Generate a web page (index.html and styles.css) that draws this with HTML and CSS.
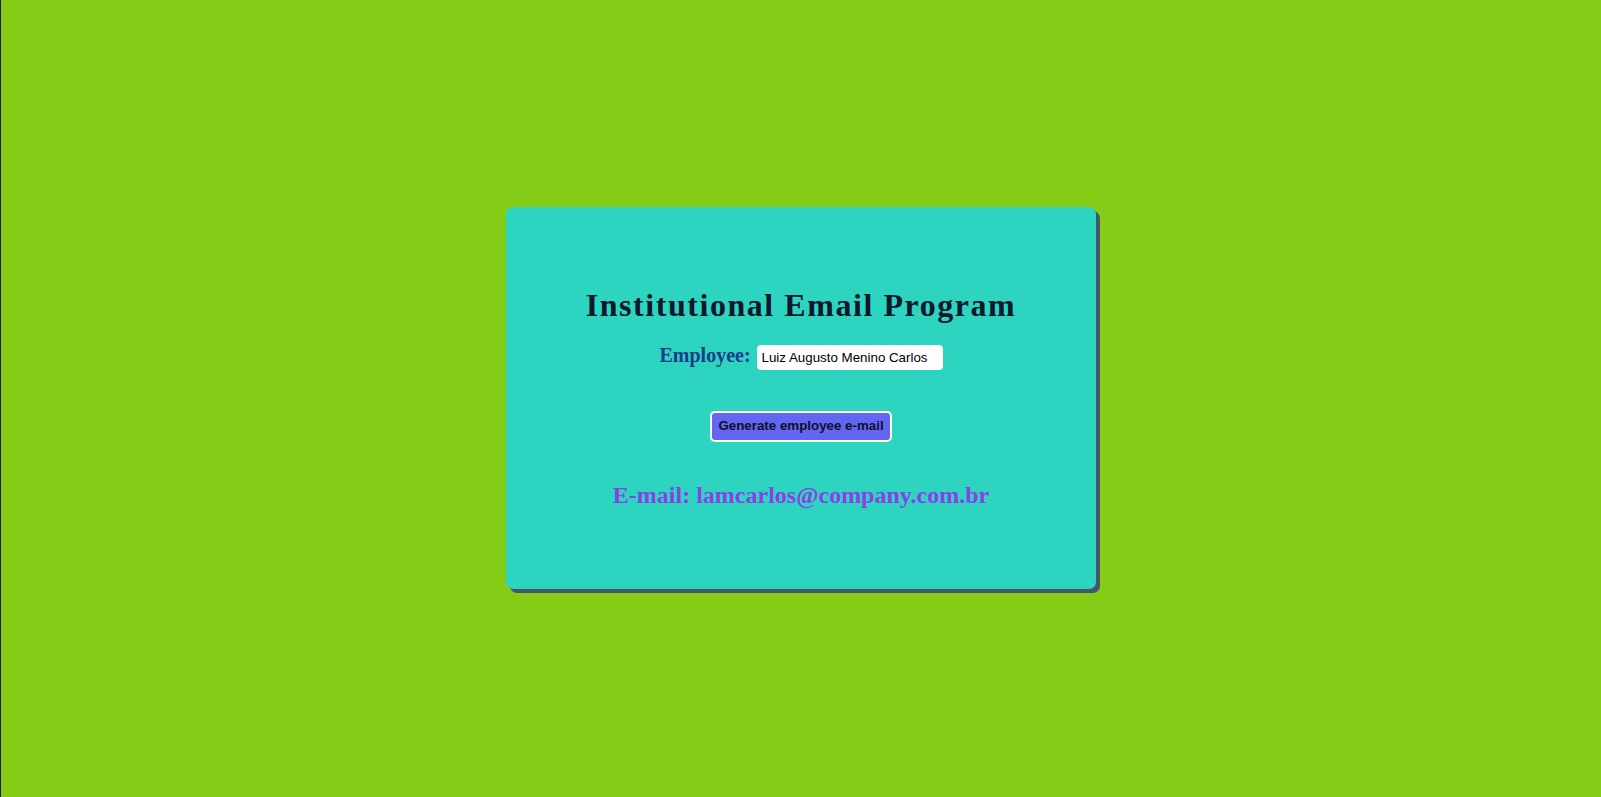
FILE: index.html
```html
<!DOCTYPE html>
<html lang="en">
<head>
<meta charset="utf-8">
<title>Institutional Email Program</title>
<link rel="stylesheet" href="styles.css">
</head>
<body>
<main class="card">
  <h1 class="title">Institutional Email Program</h1>
  <div class="field-row">
    <label class="field-label" for="employee">Employee:</label>
    <input class="field-input" id="employee" type="text" value="Luiz Augusto Menino Carlos">
  </div>
  <button class="generate-btn" type="button">Generate employee e-mail</button>
  <h2 class="result">E-mail: lamcarlos@company.com.br</h2>
</main>
</body>
</html>
```
FILE: styles.css
```css
html, body {
  margin: 0;
  padding: 0;
}

body {
  min-height: 100vh;
  background: #85cc16;
  display: flex;
  align-items: center;
  justify-content: center;
  border-left: 1px solid #1c1c1c;
  box-sizing: border-box;
  font-family: "Liberation Serif", "Times New Roman", serif;
  position: relative;
}

body::before {
  content: "";
  position: absolute;
  left: -1px;
  top: 81px;
  width: 1px;
  height: 182px;
  background: #6b6b6b;
}

.card {
  width: 590px;
  box-sizing: border-box;
  padding: 80px 20px 80px;
  margin-bottom: 1px;
  background: #2dd4bf;
  border-radius: 7px;
  box-shadow: 4px 4px 0 #475569;
  display: flex;
  flex-direction: column;
  align-items: center;
}

.title {
  margin: 0;
  font-size: 32px;
  line-height: 36px;
  font-weight: 700;
  letter-spacing: 1.55px;
  color: #0f172a;
}

.field-row {
  margin-top: 21px;
  display: flex;
  align-items: flex-start;
  gap: 6px;
}

.field-label {
  font-size: 20px;
  line-height: 23px;
  font-weight: 700;
  color: #1e3a8a;
}

.field-input {
  margin-top: 1px;
  width: 186px;
  height: 25px;
  box-sizing: border-box;
  padding: 0 5px;
  border: none;
  border-radius: 4px;
  background: #ffffff;
  font-family: "Liberation Sans", Arial, sans-serif;
  font-size: 13.33px;
  color: #000000;
  outline: none;
}

.generate-btn {
  margin-top: 41px;
  width: 182px;
  height: 31px;
  box-sizing: border-box;
  padding: 5px 4px 7px;
  background: #6366f1;
  border: 2px solid #ffffff;
  border-radius: 5px;
  font-family: "Liberation Sans", Arial, sans-serif;
  font-size: 13.33px;
  line-height: 15px;
  font-weight: 700;
  color: #0f0f2a;
  cursor: pointer;
}

.result {
  margin: 39px 0 0;
  font-size: 24px;
  line-height: 28px;
  font-weight: 700;
  color: #8b3fe8;
}
```
